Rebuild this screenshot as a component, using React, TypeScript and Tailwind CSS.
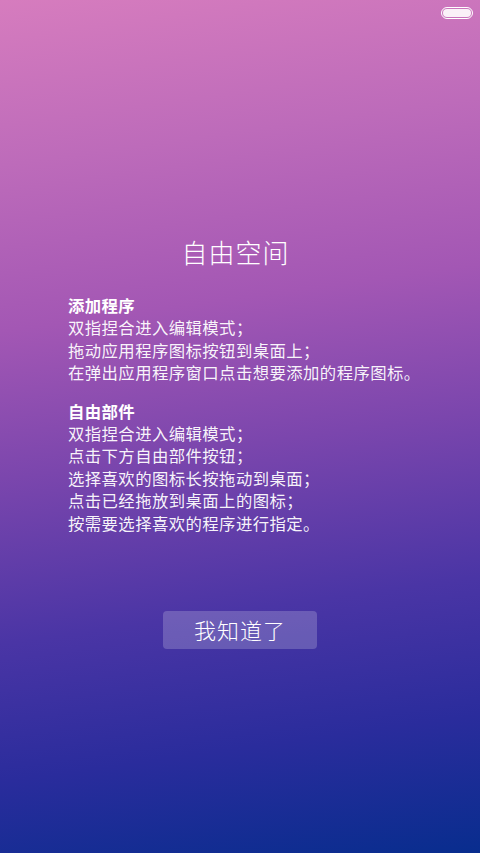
const sections = [
  {
    title: "添加程序",
    lines: [
      "双指捏合进入编辑模式；",
      "拖动应用程序图标按钮到桌面上；",
      "在弹出应用程序窗口点击想要添加的程序图标。",
    ],
  },
  {
    title: "自由部件",
    lines: [
      "双指捏合进入编辑模式；",
      "点击下方自由部件按钮；",
      "选择喜欢的图标长按拖动到桌面；",
      "点击已经拖放到桌面上的图标；",
      "按需要选择喜欢的程序进行指定。",
    ],
  },
];

export default function App() {
  return (
    <main className="relative flex min-h-[853px] w-full flex-col items-center bg-[linear-gradient(172deg,#d67cbe_0%,#bd6bba_18%,#a357b4_36%,#7b46ad_52%,#4a35a5_70%,#2a2c9c_85%,#082d8e_100%)] font-['Noto_Sans_CJK_SC',sans-serif] text-white">
      <div className="absolute right-[7px] top-[7px] rounded-full border border-white p-px">
        <div className="h-[8px] w-[28px] rounded-full bg-white/90" />
      </div>

      <h1 className="pt-[235px] pr-[9px] text-[26px] leading-[34px] font-light tracking-[1px]">自由空间</h1>

      <div className="mt-[25px] flex w-full flex-col gap-[16px] pl-[68px]">
        {sections.map((s) => (
          <div key={s.title} className="flex flex-col text-[16.4px] leading-[22.4px] tracking-[0.4px]">
            <p className="font-bold">{s.title}</p>
            {s.lines.map((line, i) => (
              <p key={i} className="text-white/95">
                {line}
              </p>
            ))}
          </div>
        ))}
      </div>

      <button className="mt-[77px] flex h-[38px] w-[154px] items-center justify-center rounded-[4px] bg-white/20 pb-px text-[22px] font-light tracking-[1px] text-white">
        我知道了
      </button>
    </main>
  );
}
